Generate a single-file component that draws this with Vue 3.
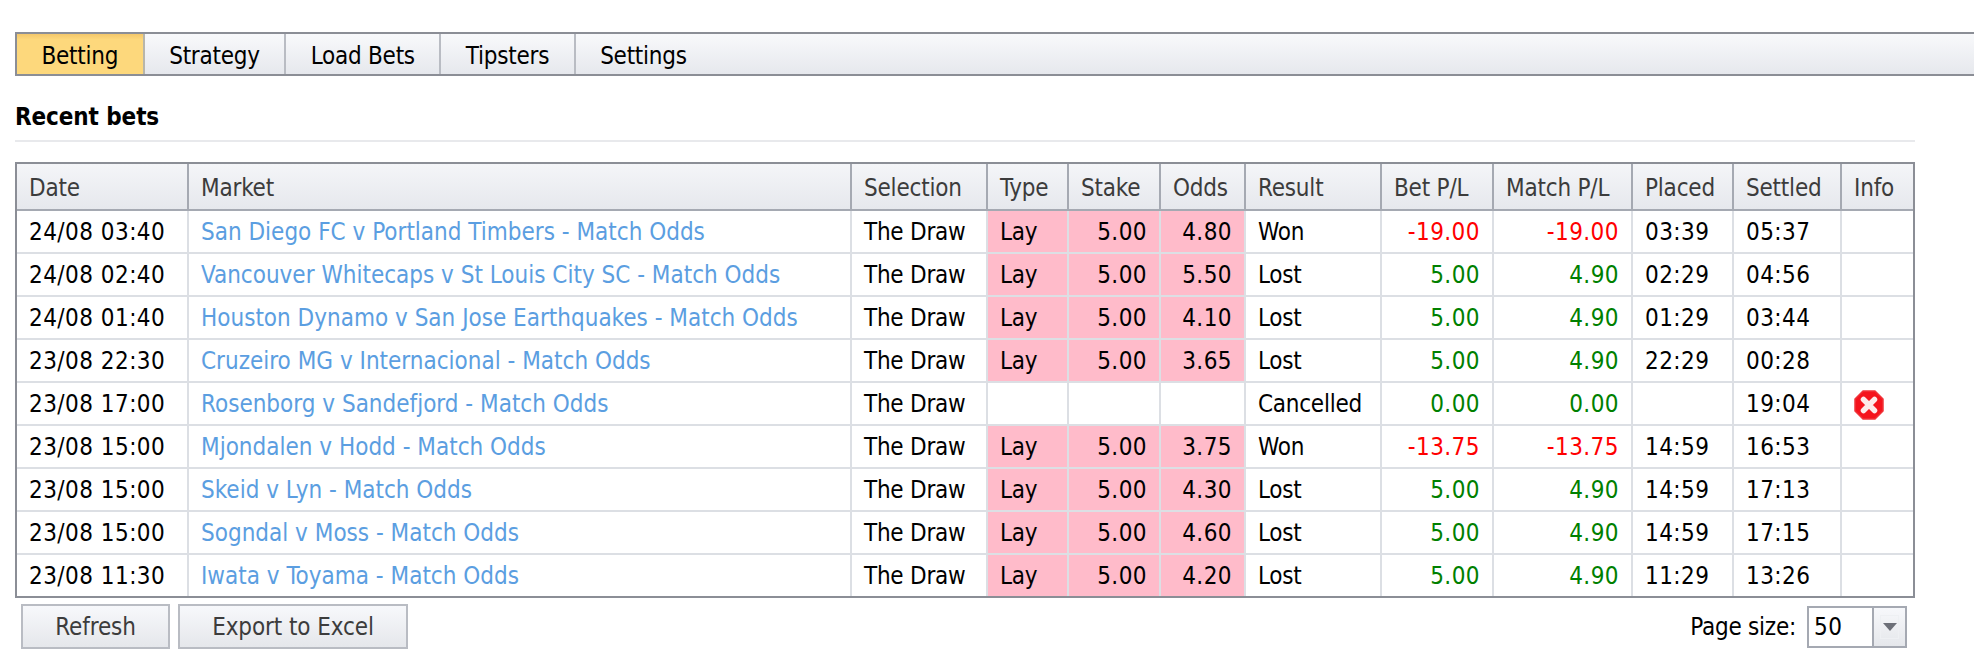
<script setup>
const tabs = ['Betting', 'Strategy', 'Load Bets', 'Tipsters', 'Settings']
const heads = ['Date', 'Market', 'Selection', 'Type', 'Stake', 'Odds', 'Result', 'Bet P/L', 'Match P/L', 'Placed', 'Settled', 'Info']
const widths = [170, 663, 136, 81, 92, 85, 136, 112, 139, 101, 108, 73]
const rows = [
  ['24/08 03:40', 'San Diego FC v Portland Timbers - Match Odds', 'Lay', '5.00', '4.80', 'Won', '-19.00', '-19.00', '03:39', '05:37'],
  ['24/08 02:40', 'Vancouver Whitecaps v St Louis City SC - Match Odds', 'Lay', '5.00', '5.50', 'Lost', '5.00', '4.90', '02:29', '04:56'],
  ['24/08 01:40', 'Houston Dynamo v San Jose Earthquakes - Match Odds', 'Lay', '5.00', '4.10', 'Lost', '5.00', '4.90', '01:29', '03:44'],
  ['23/08 22:30', 'Cruzeiro MG v Internacional - Match Odds', 'Lay', '5.00', '3.65', 'Lost', '5.00', '4.90', '22:29', '00:28'],
  ['23/08 17:00', 'Rosenborg v Sandefjord - Match Odds', '', '', '', 'Cancelled', '0.00', '0.00', '', '19:04', true],
  ['23/08 15:00', 'Mjondalen v Hodd - Match Odds', 'Lay', '5.00', '3.75', 'Won', '-13.75', '-13.75', '14:59', '16:53'],
  ['23/08 15:00', 'Skeid v Lyn - Match Odds', 'Lay', '5.00', '4.30', 'Lost', '5.00', '4.90', '14:59', '17:13'],
  ['23/08 15:00', 'Sogndal v Moss - Match Odds', 'Lay', '5.00', '4.60', 'Lost', '5.00', '4.90', '14:59', '17:15'],
  ['23/08 11:30', 'Iwata v Toyama - Match Odds', 'Lay', '5.00', '4.20', 'Lost', '5.00', '4.90', '11:29', '13:26'],
]
const plClass = (v) => (v.startsWith('-') ? 'neg' : 'pos')
</script>

<template>
  <div class="page">
    <nav class="tabs">
      <div v-for="(t, i) in tabs" :key="t" class="tab" :class="{ active: i === 0 }">{{ t }}</div>
    </nav>
    <h2 class="title">Recent bets</h2>
    <table class="grid">
      <colgroup>
        <col v-for="(w, i) in widths" :key="i" :style="{ width: w + 'px' }" />
      </colgroup>
      <thead>
        <tr><th v-for="h in heads" :key="h">{{ h }}</th></tr>
      </thead>
      <tbody>
        <tr v-for="(r, i) in rows" :key="i">
          <td class="digits">{{ r[0] }}</td>
          <td class="link">{{ r[1] }}</td>
          <td class="plain">The Draw</td>
          <td class="plain" :class="{ lay: r[2] }">{{ r[2] }}</td>
          <td class="num digits" :class="{ lay: r[2] }">{{ r[3] }}</td>
          <td class="num digits" :class="{ lay: r[2] }">{{ r[4] }}</td>
          <td class="plain">{{ r[5] }}</td>
          <td class="num digits" :class="plClass(r[6])">{{ r[6] }}</td>
          <td class="num digits" :class="plClass(r[7])">{{ r[7] }}</td>
          <td class="digits">{{ r[8] }}</td>
          <td class="digits">{{ r[9] }}</td>
          <td class="info">
            <svg v-if="r[10]" class="err" width="30" height="30" viewBox="0 0 30 30">
              <path d="M9 1h12l8 8v12l-8 8H9l-8-8V9z" fill="#f5131c" stroke="#f0343a" stroke-width="1.500" stroke-linejoin="round" />
              <path d="M9.500 9.500l11 11M20.500 9.500l-11 11" stroke="#fdeaea" stroke-width="5.500" stroke-linecap="round" />
            </svg>
          </td>
        </tr>
      </tbody>
    </table>
    <div class="footer">
      <div class="buttons">
        <button class="btn refresh">Refresh</button>
        <button class="btn export">Export to Excel</button>
      </div>
      <div class="pager">
        <span class="plain">Page size:</span>
        <div class="combo">
          <span class="value digits">50</span>
          <span class="arrow"><span class="arrow-box"><i></i></span></span>
        </div>
      </div>
    </div>
  </div>
</template>

<style>
html, body { margin: 0; background: #fff; }
</style>

<style scoped>
.page {
  padding: 32px 59px 0 15px;
  font-family: "DejaVu Sans Condensed", "DejaVu Sans", sans-serif;
  font-stretch: condensed;
  font-size: 24px;
  color: #000;
}
.tabs {
  display: flex;
  height: 40px;
  border: 2px solid #8b8e96;
  border-right: 0;
  margin-right: -59px;
  background: linear-gradient(#f8f9fb, #e6e8ed);
}
.tab {
  display: flex;
  align-items: center;
  padding: 3px 24.500px 0;
  border-right: 2px solid #b9bcc3;
  letter-spacing: -0.25px;
}
.tab:last-child { border-right: 0; }
.tab.active { background: linear-gradient(#f3c76b 0, #fdd87c 14%, #fdd87c); border-right-color: #b8b6aa; }
.title {
  margin: 27px 0 0;
  padding-bottom: 9px;
  font-size: 24px;
  line-height: 28px;
  font-weight: 700;
  letter-spacing: -0.1px;
  border-bottom: 2px solid #e8e9ec;
}
.grid {
  margin-top: 20px;
  width: 1900px;
  table-layout: fixed;
  border-collapse: separate;
  border-spacing: 0;
  border: 2px solid #8b8e96;
}
.grid th {
  height: 47px;
  padding: 2px 12px 0;
  box-sizing: border-box;
  text-align: left;
  font-weight: 400;
  letter-spacing: -0.2px;
  color: #3c3c3c;
  background: linear-gradient(#f4f5f8, #e6e8ed);
  border-left: 2px solid #a5a9b2;
  border-bottom: 2px solid #a5a9b2;
}
.grid th:first-child, .grid td:first-child { border-left: 0; }
.grid td {
  height: 43px;
  padding: 0 12px;
  box-sizing: border-box;
  border-left: 2px solid #dcdfe4;
  border-bottom: 2px solid #dcdfe4;
  white-space: nowrap;
  overflow: hidden;
}
.grid tbody tr:last-child td { border-bottom: 0; height: 41px; }
.grid td.digits, .value.digits { letter-spacing: 0.45px; }
.grid td.plain, .pager .plain { letter-spacing: -0.25px; }
.link { color: #5b9ee1; }
.lay { background: #ffbbca; }
.num { text-align: right; }
.neg { color: #ff0000; }
.pos { color: #008000; }
.grid td.info { padding-top: 2px; }
.err { display: block; }
.footer {
  width: 1900px;
  display: flex;
  justify-content: space-between;
  margin-top: 6px;
}
.buttons { display: flex; gap: 8px; padding-left: 6px; }
.btn {
  height: 45px;
  padding: 0;
  font: inherit;
  font-stretch: condensed;
  letter-spacing: -0.1px;
  color: #3c3c3c;
  border: 2px solid #b9bcc3;
  background: linear-gradient(#f7f8fb, #e5e7eb);
}
.refresh { width: 149px; }
.export { width: 230px; }
.pager {
  display: flex;
  align-items: center;
  gap: 11px;
  padding-right: 8px;
  margin-top: 2px;
  height: 42px;
}
.combo {
  display: flex;
  width: 100px;
  height: 42px;
  box-sizing: border-box;
  border: 2px solid #a5a9b2;
}
.value { flex: 1; line-height: 38px; padding-left: 5px; }
.arrow {
  width: 31px;
  display: flex;
  align-items: center;
  justify-content: center;
  border-left: 2px solid #a5a9b2;
  background: linear-gradient(#f7f8fb, #e5e7eb);
}
.arrow-box {
  width: 19px;
  height: 24px;
  display: flex;
  align-items: center;
  justify-content: center;
  box-sizing: border-box;
  border: 1px solid #eef0f3;
}
.arrow i {
  width: 0;
  height: 0;
  border-left: 7.500px solid transparent;
  border-right: 7.500px solid transparent;
  border-top: 8px solid #6d7078;
}
</style>
